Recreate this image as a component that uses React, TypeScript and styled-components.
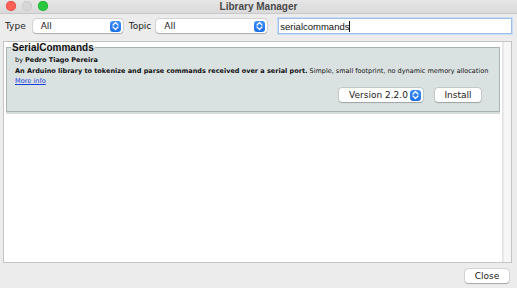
import React from "react";
import styled, { createGlobalStyle } from "styled-components";

const GlobalStyle = createGlobalStyle`
  html, body {
    margin: 0;
    padding: 0;
    background: #ececec;
  }
  body {
    font-family: "DejaVu Sans", "Liberation Sans", sans-serif;
    -webkit-font-smoothing: antialiased;
  }
`;

const Stepper = () => (
  <StepperBox>
    <svg width="7" height="10" viewBox="0 0 7 10">
      <path
        d="M1 4 L3.5 1.5 L6 4 M1 6 L3.5 8.5 L6 6"
        fill="none"
        stroke="#fff"
        strokeWidth="1.2"
        strokeLinecap="round"
        strokeLinejoin="round"
      />
    </svg>
  </StepperBox>
);

interface SelectProps {
  value: string;
  width: number;
  align?: "left" | "center";
}

const Select = ({ value, width, align = "left" }: SelectProps) => (
  <SelectBox style={{ width }} $align={align}>
    <span className="value">{value}</span>
    <Stepper />
  </SelectBox>
);

const App = () => {
  return (
    <>
      <GlobalStyle />
      <Window>
        <TitleBar>
          <Lights>
            <Light $color="#fe5f57" $border="#e0443e" />
            <Light $color="#d6d6d6" $border="#c4c4c4" />
            <Light $color="#29c840" $border="#1aab29" />
          </Lights>
          <Title>Library Manager</Title>
        </TitleBar>

        <Toolbar>
          <Label>Type</Label>
          <Select value="All" width={90} />
          <Label className="topic">Topic</Label>
          <Select value="All" width={111} />
          <Search>
            serialcommands<Caret />
          </Search>
        </Toolbar>

        <ListFrame>
          <List>
            <Item>
              <legend>SerialCommands</legend>
              <p className="by">
                by <b>Pedro Tiago Pereira</b>
              </p>
              <p className="desc">
                <b>
                  An Arduino library to tokenize and parse commands received
                  over a serial port.
                </b>{" "}
                Simple, small footprint, no dynamic memory allocation
              </p>
              <a className="more" href="#">
                More info
              </a>
              <Actions>
                <Select value="Version 2.2.0" width={84} align="center" />
                <PushButton $width={46}>Install</PushButton>
              </Actions>
            </Item>
          </List>
          <ScrollTrack />
        </ListFrame>

        <Footer>
          <PushButton $width={44}>Close</PushButton>
        </Footer>
      </Window>
    </>
  );
};

const Window = styled.div`
  width: 517px;
  height: 288px;
  display: flex;
  flex-direction: column;
  background: #ececec;
  overflow: hidden;
`;

const TitleBar = styled.div`
  position: relative;
  height: 13px;
  flex: none;
  display: flex;
  align-items: center;
  justify-content: center;
  background: linear-gradient(#e6e6e6, #dadada);
  border-bottom: 1px solid #c8c8c8;
`;

const Lights = styled.div`
  position: absolute;
  left: 6px;
  top: 1px;
  display: flex;
  gap: 6px;
`;

const Light = styled.span<{ $color: string; $border: string }>`
  width: 10px;
  height: 10px;
  border-radius: 50%;
  background: ${({ $color }) => $color};
  box-shadow: inset 0 0 0 0.5px ${({ $border }) => $border};
`;

const Title = styled.span`
  font-family: "Liberation Sans", Arial, sans-serif;
  font-size: 10px;
  font-weight: bold;
  color: #4a4a4a;
  margin-top: -1px;
`;

const Toolbar = styled.div`
  display: flex;
  align-items: center;
  height: 24px;
  padding: 0 5px;
  flex: none;
`;

const Label = styled.span`
  font-size: 9px;
  color: #222;
  margin-right: 7px;
  &.topic {
    margin-left: 0;
    margin-right: 5px;
  }
`;

const SelectBox = styled.div<{ $align: "left" | "center" }>`
  box-sizing: border-box;
  height: 14px;
  display: flex;
  align-items: center;
  background: #fff;
  border-radius: 3px;
  box-shadow: 0 0 0 0.5px rgba(0, 0, 0, 0.18), 0 0.5px 1px rgba(0, 0, 0, 0.2);
  padding: 0 2px 0 ${({ $align }) => ($align === "center" ? "10px" : "8px")};
  margin-right: 6px;
  .value {
    flex: 1;
    font-size: 9px;
    color: #1a1a1a;
  }
`;

const StepperBox = styled.span`
  width: 11px;
  height: 11px;
  border-radius: 3px;
  background: linear-gradient(#3d8ff8, #1d6fe8);
  display: flex;
  align-items: center;
  justify-content: center;
`;

const Search = styled.div`
  box-sizing: border-box;
  margin-left: 5px;
  flex: 1;
  height: 16px;
  background: #fff;
  border: 1px solid #9fbfe8;
  box-shadow: 0 0 0 1px #c8dcf5;
  font-family: "Liberation Sans", Arial, sans-serif;
  font-size: 9.5px;
  color: #111;
  display: flex;
  align-items: center;
  padding-left: 1px;
`;

const Caret = styled.span`
  width: 1px;
  height: 11px;
  background: #111;
`;

const ListFrame = styled.div`
  flex: 1;
  display: flex;
  margin: 3px 5px 0 3px;
  border: 1px solid #c4c4c4;
  background: #fff;
  min-height: 0;
`;

const List = styled.div`
  flex: 1;
  padding: 0 2px;
  border-right: 1px solid #e3e3e3;
`;

const ScrollTrack = styled.div`
  width: 7px;
  background: #f6f6f6;
  border-left: 1px solid #eaeaea;
`;

const Item = styled.fieldset`
  margin: 0;
  padding: 0 6px 9px 8px;
  background: #dae1e1;
  border: 1px solid #a9b2b2;
  box-shadow: 0 2px 0 #d5dcdc;
  position: relative;
  legend {
    font-family: "Liberation Sans", Arial, sans-serif;
    font-size: 10px;
    font-weight: bold;
    color: #111;
    padding: 0 1px;
    margin-left: -4px;
  }
  p {
    margin: 0;
    font-size: 6.5px;
    line-height: 10px;
    color: #111;
    white-space: nowrap;
  }
  .by {
    margin-top: 2px;
  }
  .desc {
    margin-top: 1px;
  }
  b {
    font-weight: bold;
  }
  .more {
    display: block;
    font-size: 6.6px;
    line-height: 10px;
    color: #1a3fe0;
    text-decoration: underline;
  }
`;

const Actions = styled.div`
  display: flex;
  justify-content: flex-end;
  align-items: center;
  gap: 6px;
  margin-top: 2px;
  padding-right: 12px;
`;

const PushButton = styled.button<{ $width: number }>`
  width: ${({ $width }) => $width}px;
  height: 14px;
  padding: 0;
  border: none;
  border-radius: 3px;
  background: #fff;
  box-shadow: 0 0 0 0.5px rgba(0, 0, 0, 0.18), 0 0.5px 1px rgba(0, 0, 0, 0.22);
  font-family: "DejaVu Sans", sans-serif;
  font-size: 9px;
  color: #1a1a1a;
`;

const Footer = styled.div`
  height: 25px;
  flex: none;
  display: flex;
  align-items: center;
  justify-content: flex-end;
  padding-right: 8px;
`;

export default App;
